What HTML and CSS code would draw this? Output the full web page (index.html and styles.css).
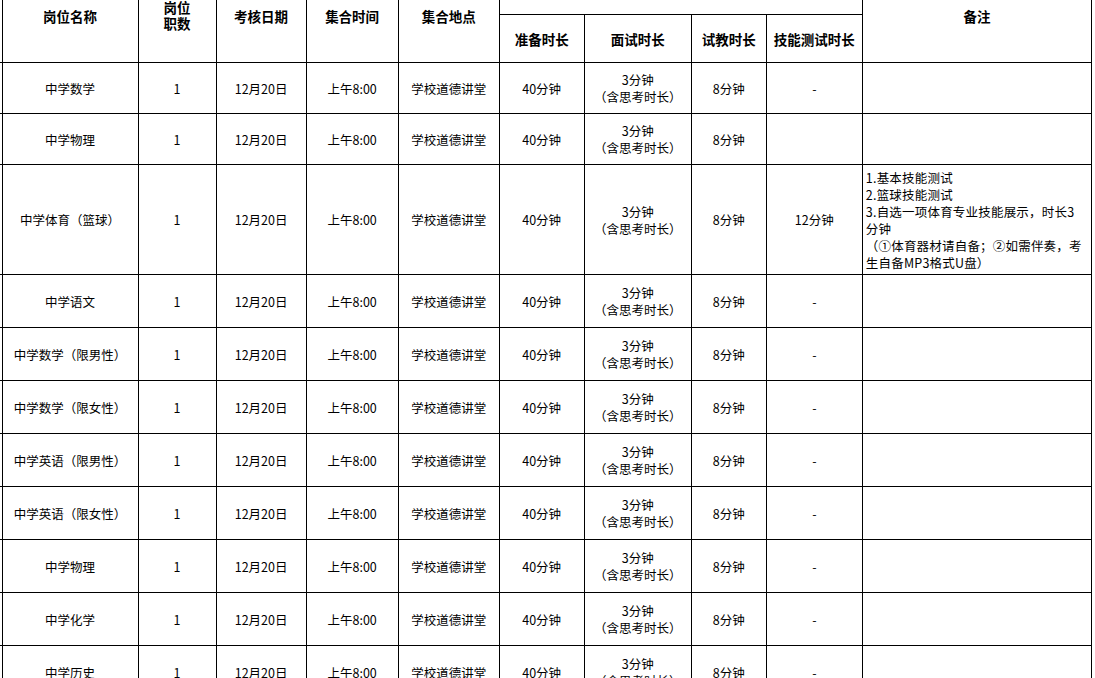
FILE: index.html
```html
<!DOCTYPE html>
<html lang="zh-CN">
<head>
<meta charset="utf-8">
<title>考核安排</title>
<link rel="stylesheet" href="styles.css">
</head>
<body>
<table class="sheet">
  <colgroup>
    <col class="c-edge">
    <col class="c-name">
    <col class="c-num">
    <col class="c-date">
    <col class="c-time">
    <col class="c-place">
    <col class="c-prep">
    <col class="c-interview">
    <col class="c-teach">
    <col class="c-skill">
    <col class="c-note">
  </colgroup>
  <thead>
    <tr class="h1">
      <th class="edge" rowspan="2"></th>
      <th rowspan="2">岗位名称</th>
      <th rowspan="2" class="two">岗位<br>职数</th>
      <th rowspan="2">考核日期</th>
      <th rowspan="2">集合时间</th>
      <th rowspan="2">集合地点</th>
      <th colspan="4"></th>
      <th rowspan="2">备注</th>
    </tr>
    <tr class="h2">
      <th>准备时长</th>
      <th>面试时长</th>
      <th>试教时长</th>
      <th>技能测试时长</th>
    </tr>
  </thead>
  <tbody>
    <tr class="r-short">
      <td class="edge"></td><td>中学数学</td><td>1</td><td>12月20日</td><td>上午8:00</td><td>学校道德讲堂</td><td>40分钟</td><td>3分钟<br>（含思考时长）</td><td>8分钟</td><td>-</td><td class="note"></td>
    </tr>
    <tr class="r-short">
      <td class="edge"></td><td>中学物理</td><td>1</td><td>12月20日</td><td>上午8:00</td><td>学校道德讲堂</td><td>40分钟</td><td>3分钟<br>（含思考时长）</td><td>8分钟</td><td></td><td class="note"></td>
    </tr>
    <tr class="r-tall">
      <td class="edge"></td><td>中学体育（篮球）</td><td>1</td><td>12月20日</td><td>上午8:00</td><td>学校道德讲堂</td><td>40分钟</td><td>3分钟<br>（含思考时长）</td><td>8分钟</td><td>12分钟</td>
      <td class="note">1.基本技能测试<br>2.篮球技能测试<br>3.自选一项体育专业技能展示，时长3<br>分钟<br>（①体育器材请自备；②如需伴奏，考<br>生自备MP3格式U盘）</td>
    </tr>
    <tr class="r">
      <td class="edge"></td><td>中学语文</td><td>1</td><td>12月20日</td><td>上午8:00</td><td>学校道德讲堂</td><td>40分钟</td><td>3分钟<br>（含思考时长）</td><td>8分钟</td><td>-</td><td class="note"></td>
    </tr>
    <tr class="r">
      <td class="edge"></td><td>中学数学（限男性）</td><td>1</td><td>12月20日</td><td>上午8:00</td><td>学校道德讲堂</td><td>40分钟</td><td>3分钟<br>（含思考时长）</td><td>8分钟</td><td>-</td><td class="note"></td>
    </tr>
    <tr class="r">
      <td class="edge"></td><td>中学数学（限女性）</td><td>1</td><td>12月20日</td><td>上午8:00</td><td>学校道德讲堂</td><td>40分钟</td><td>3分钟<br>（含思考时长）</td><td>8分钟</td><td>-</td><td class="note"></td>
    </tr>
    <tr class="r">
      <td class="edge"></td><td>中学英语（限男性）</td><td>1</td><td>12月20日</td><td>上午8:00</td><td>学校道德讲堂</td><td>40分钟</td><td>3分钟<br>（含思考时长）</td><td>8分钟</td><td>-</td><td class="note"></td>
    </tr>
    <tr class="r">
      <td class="edge"></td><td>中学英语（限女性）</td><td>1</td><td>12月20日</td><td>上午8:00</td><td>学校道德讲堂</td><td>40分钟</td><td>3分钟<br>（含思考时长）</td><td>8分钟</td><td>-</td><td class="note"></td>
    </tr>
    <tr class="r">
      <td class="edge"></td><td>中学物理</td><td>1</td><td>12月20日</td><td>上午8:00</td><td>学校道德讲堂</td><td>40分钟</td><td>3分钟<br>（含思考时长）</td><td>8分钟</td><td>-</td><td class="note"></td>
    </tr>
    <tr class="r">
      <td class="edge"></td><td>中学化学</td><td>1</td><td>12月20日</td><td>上午8:00</td><td>学校道德讲堂</td><td>40分钟</td><td>3分钟<br>（含思考时长）</td><td>8分钟</td><td>-</td><td class="note"></td>
    </tr>
    <tr class="r">
      <td class="edge"></td><td>中学历史</td><td>1</td><td>12月20日</td><td>上午8:00</td><td>学校道德讲堂</td><td>40分钟</td><td>3分钟<br>（含思考时长）</td><td>8分钟</td><td>-</td><td class="note"></td>
    </tr>
  </tbody>
</table>
</body>
</html>
```

FILE: styles.css
```css
html, body {
  margin: 0;
  padding: 0;
  background: #fff;
  overflow: hidden;
}

body {
  font-family: "Noto Sans CJK SC", "Noto Sans", sans-serif;
  color: #000;
  text-spacing-trim: space-all;
}

.sheet {
  border-collapse: collapse;
  table-layout: fixed;
  width: 1100px;
  margin-top: -32px;
  margin-left: -8px;
}

.c-edge { width: 10px; }
.c-name { width: 136px; }
.c-num { width: 78px; }
.c-date { width: 90px; }
.c-time { width: 92px; }
.c-place { width: 101px; }
.c-prep { width: 85px; }
.c-interview { width: 107px; }
.c-teach { width: 75px; }
.c-skill { width: 96px; }
.c-note { width: 229px; }

.sheet th,
.sheet td {
  border: 1px solid #000;
  padding: 0 3px;
  text-align: center;
  vertical-align: middle;
  line-height: 17px;
  white-space: nowrap;
  overflow: hidden;
}

.sheet th {
  font-size: 13.5px;
  font-weight: 700;
  line-height: 16px;
}

.sheet th.two {
  line-height: 15.5px;
}

.sheet td {
  font-size: 12.5px;
  font-weight: 400;
}

.sheet .edge {
  border-left: none;
  border-top: none;
  padding: 0;
}

.sheet td.note {
  text-align: left;
  padding: 0 2px 0 3px;
  font-size: 12.5px;
  letter-spacing: 0.2px;
}

.h1 { height: 46px; }
.h2 { height: 48px; }
.r-short { height: 51px; }
.r-tall { height: 110px; }
.r { height: 53px; }
```
